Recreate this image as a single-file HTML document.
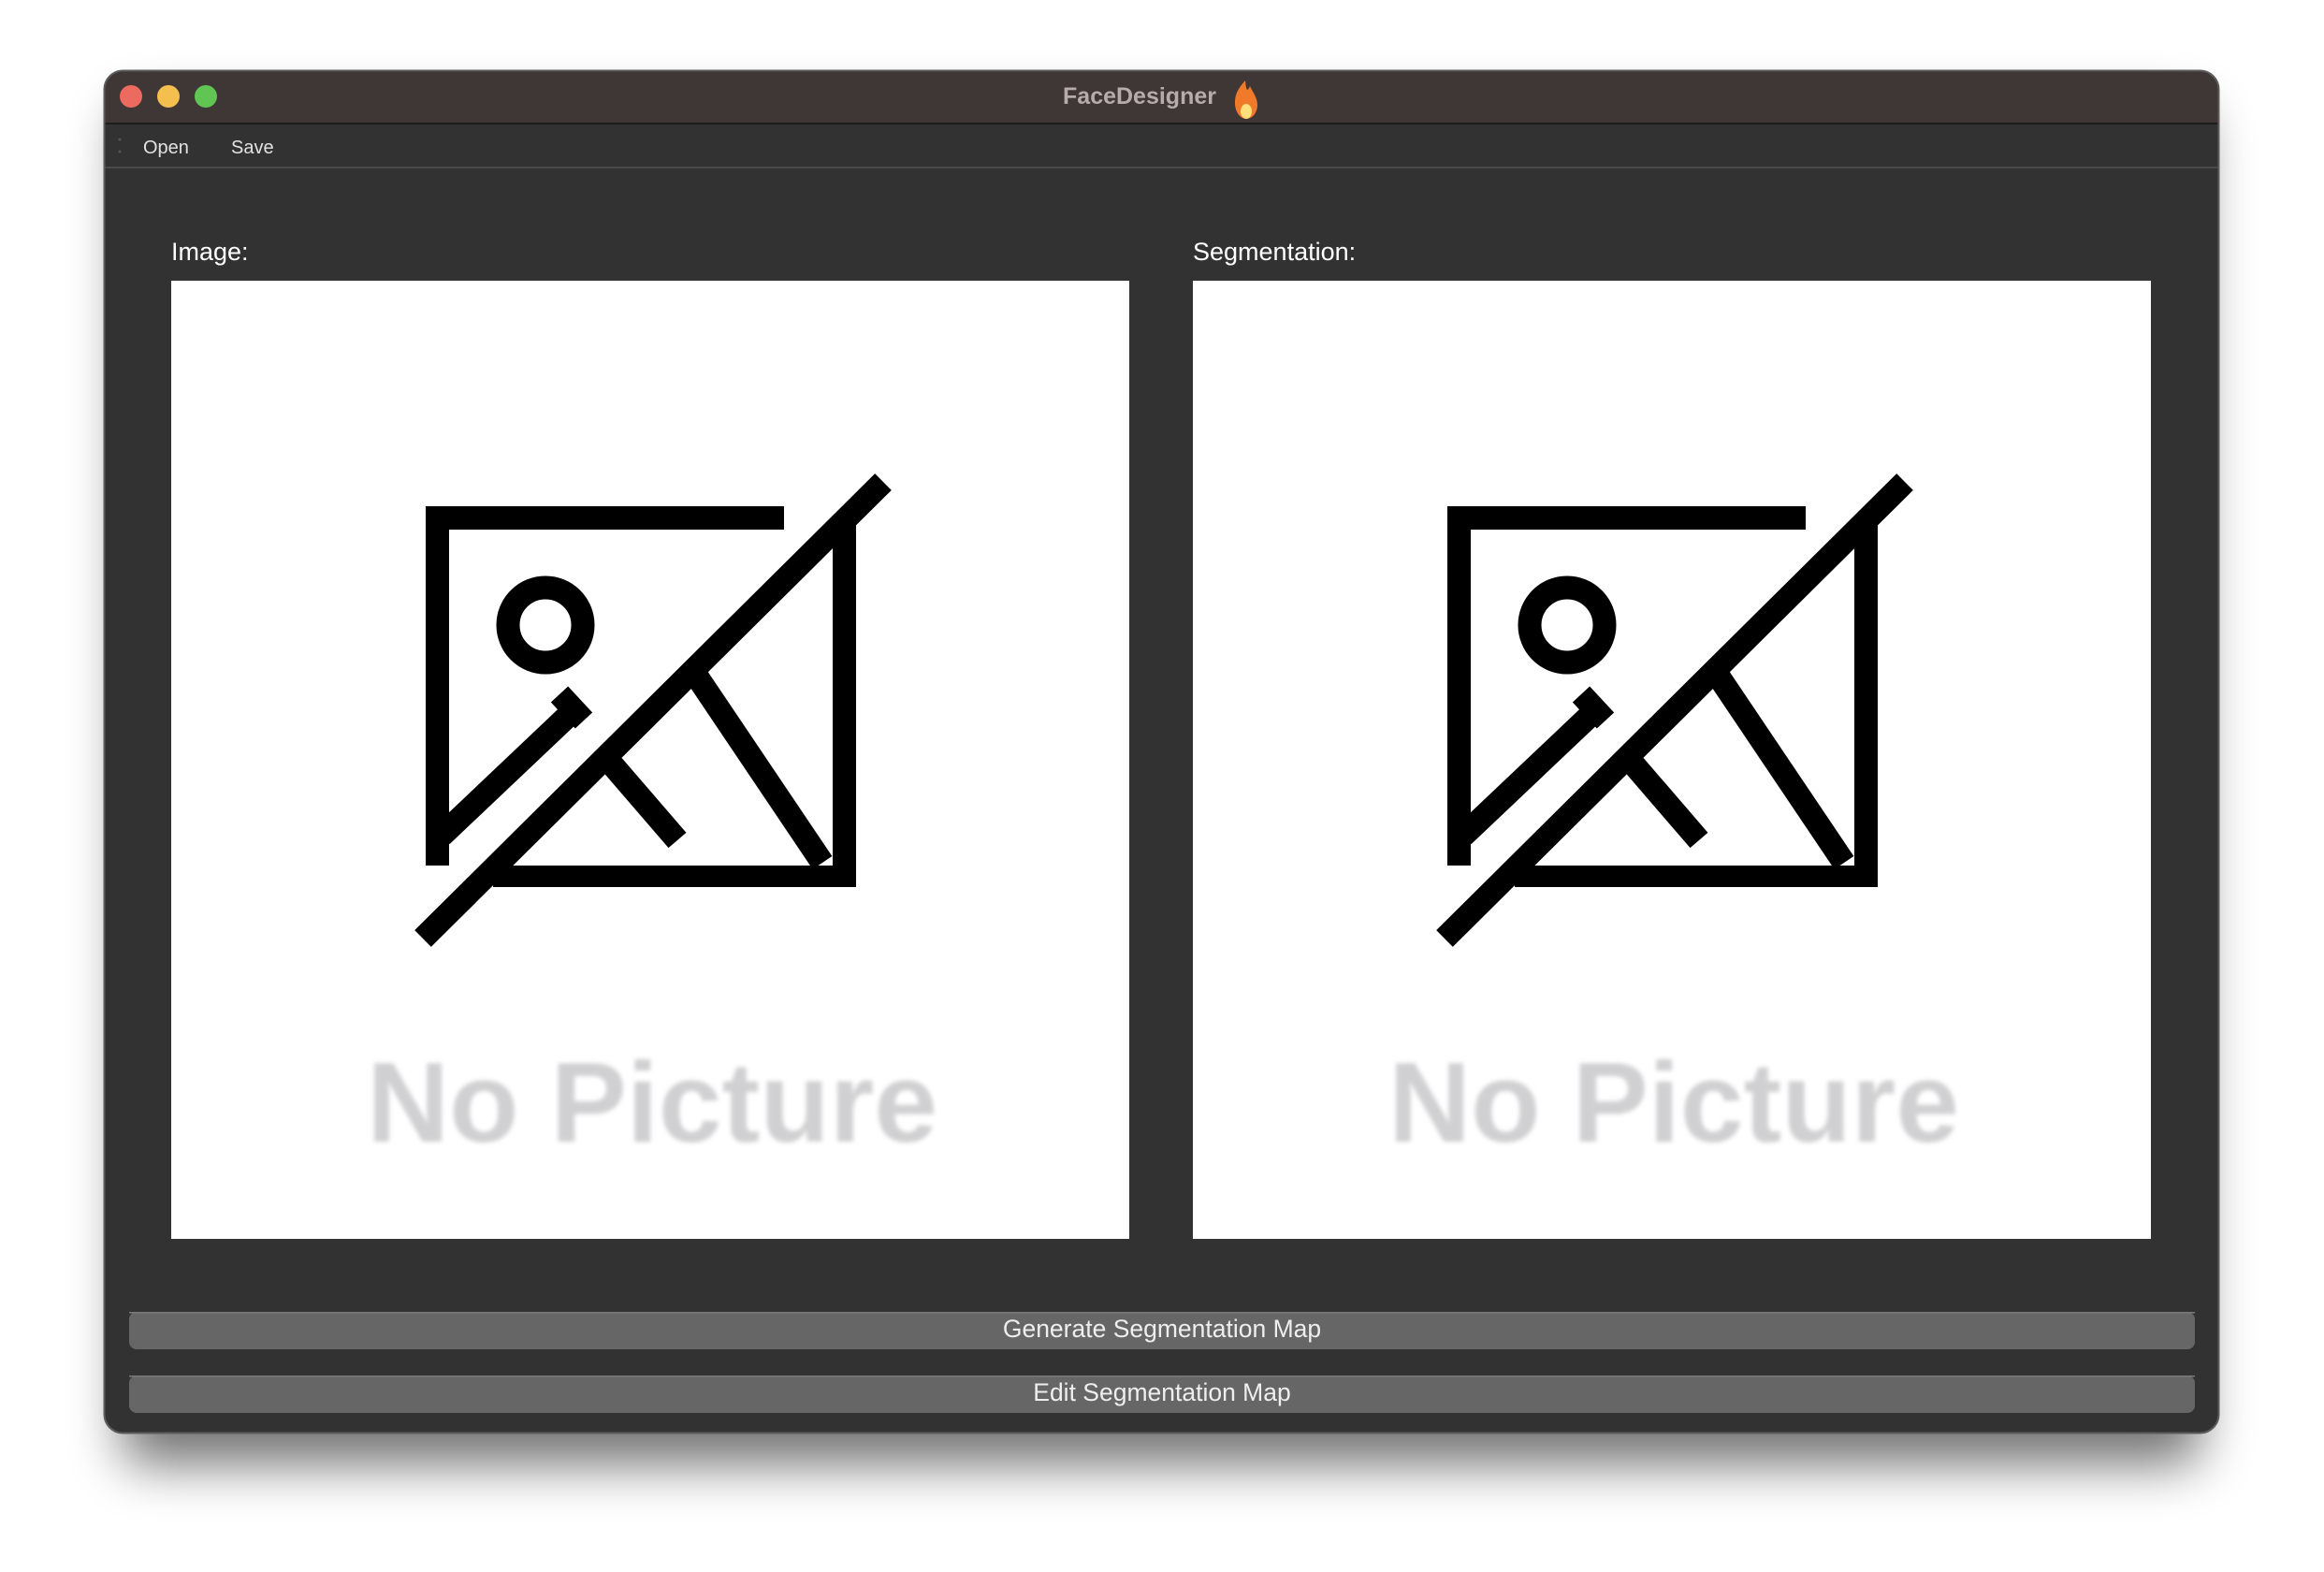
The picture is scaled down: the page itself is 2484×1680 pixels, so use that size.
<!DOCTYPE html>
<html><head><meta charset="utf-8"><style>
html,body{margin:0;padding:0;background:#fff;}
svg{display:block}
text{font-family:"Liberation Sans","DejaVu Sans",sans-serif;}
</style></head><body>
<svg width="2484" height="1680" viewBox="0 0 2484 1680" xmlns="http://www.w3.org/2000/svg">
<defs>
<filter id="sh" x="-10%" y="-10%" width="120%" height="130%"><feGaussianBlur stdDeviation="28"/></filter>
<filter id="bl" x="-5%" y="-20%" width="110%" height="140%"><feGaussianBlur stdDeviation="2.5"/></filter>
<clipPath id="win"><rect x="111" y="75" width="2261" height="1457" rx="20"/></clipPath>
</defs>
<rect width="2484" height="1680" fill="#ffffff"/>
<rect x="131" y="115" width="2221" height="1450" rx="20" fill="#000" opacity="0.55" filter="url(#sh)"/>
<g clip-path="url(#win)">
<rect x="111" y="75" width="2261" height="1457" fill="#323232"/>
<rect x="111" y="75" width="2261" height="57" fill="#3f3636"/>
<rect x="111" y="131" width="2261" height="2" fill="#1c1c1c"/>
<rect x="111" y="178" width="2261" height="2" fill="#4a4a4a"/>
</g>
<rect x="111.5" y="75.5" width="2260" height="1456" rx="20" fill="none" stroke="#5c5c5c" stroke-width="2"/>
<circle cx="140" cy="103" r="12" fill="#ed6a5e"/>
<circle cx="180" cy="103" r="12" fill="#f4bf4f"/>
<circle cx="220" cy="103" r="12" fill="#61c554"/>
<text x="1218" y="111" font-size="25" font-weight="bold" fill="#b6acac" text-anchor="middle">FaceDesigner</text>
<path d="M1331 86 C1323 95 1320 101 1320 110 C1320 120 1326 127 1332 127 C1339 127 1344 120 1344 112 C1344 104 1338 97 1336 92 C1334 97 1332 99 1331 86Z" fill="#f07a2a"/>
<ellipse cx="1332" cy="119" rx="6" ry="8" fill="#ffe07a"/>
<circle cx="128" cy="149" r="1.5" fill="#555"/><circle cx="128" cy="162" r="1.5" fill="#555"/>
<text x="153" y="164" font-size="20" fill="#e2e2e2">Open</text>
<text x="247" y="164" font-size="20" fill="#e2e2e2">Save</text>
<text x="183" y="278" font-size="27" fill="#ffffff">Image:</text>
<text x="1275" y="278" font-size="27" fill="#ffffff">Segmentation:</text>
<g id="box">
<rect x="183" y="300" width="1024" height="1024" fill="#ffffff"/>
<g fill="#000">
<rect x="455" y="541" width="25" height="384"/>
<rect x="455" y="541" width="383" height="25"/>
<rect x="890" y="557" width="25" height="391"/>
<rect x="527" y="925" width="388" height="23"/>
</g>
<g stroke="#000" stroke-width="25" fill="none" stroke-linecap="butt">
<circle cx="583" cy="668" r="40"/>
<path d="M472 893 L606 766"/>
<path d="M598 742 L624 770"/>
<path d="M743 720 L879 922"/>
<path d="M655 818 L724 898"/>
<path d="M944 515 L452 1003"/>
</g>
<text x="697" y="1220" font-size="122" font-weight="bold" fill="#d0d0d2" text-anchor="middle" filter="url(#bl)">No Picture</text>
</g>
<use href="#box" transform="translate(1092,0)"/>
<rect x="138" y="1402" width="2208" height="40" rx="8" fill="#666666"/>
<rect x="138" y="1402" width="2208" height="1.5" fill="#7a7a7a"/>
<rect x="138" y="1470" width="2208" height="40" rx="8" fill="#666666"/>
<rect x="138" y="1470" width="2208" height="1.5" fill="#7a7a7a"/>
<text x="1242" y="1429" font-size="26.5" fill="#eeeeee" text-anchor="middle">Generate Segmentation Map</text>
<text x="1242" y="1497" font-size="26.5" fill="#eeeeee" text-anchor="middle">Edit Segmentation Map</text>
</svg>
</body></html>
